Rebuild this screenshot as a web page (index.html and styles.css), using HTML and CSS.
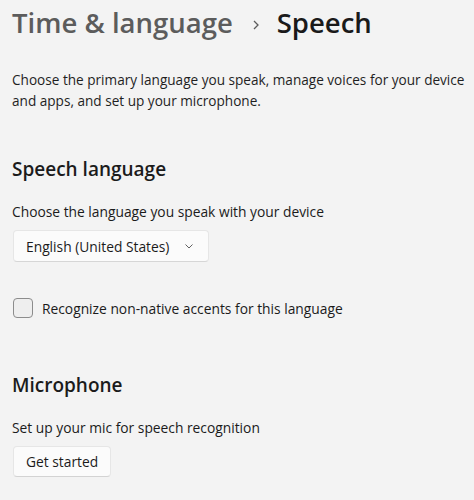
FILE: index.html
```html
<!DOCTYPE html>
<html lang="en">
<head>
    <meta charset="UTF-8">
    <meta name="viewport" content="width=device-width, initial-scale=1.0">
    <title>Speech</title>
    <link rel="stylesheet" href="styles.css">
</head>
<body>
    <div class="page">
        <h1 class="breadcrumb">
            <span class="crumb-parent">Time &amp; language</span>
            <svg class="crumb-sep" width="6" height="10" viewBox="0 0 6 10">
                <path d="M1 1l4 4-4 4" fill="none" stroke="#5c5c5c" stroke-width="1.3"/>
            </svg>
            <span class="crumb-current">Speech</span>
        </h1>
        <p class="intro">Choose the primary language you speak, manage voices for your device and apps, and set up your microphone.</p>

        <section class="section">
            <h2>Speech language</h2>
            <p class="hint">Choose the language you speak with your device</p>
            <div class="dropdown">
                <span>English (United States)</span>
                <svg class="chevron" width="8" height="5" viewBox="0 0 8 5">
                    <path d="M0.5 0.5l3.5 3.5 3.5-3.5" fill="none" stroke="#606060" stroke-width="1"/>
                </svg>
            </div>
            <label class="check-row">
                <span class="checkbox"></span>
                <span>Recognize non-native accents for this language</span>
            </label>
        </section>

        <section class="section mic">
            <h2>Microphone</h2>
            <p class="hint">Set up your mic for speech recognition</p>
            <button type="button" class="btn">Get started</button>
        </section>
    </div>
</body>
</html>
```

FILE: styles.css
```css
body {
    margin: 0;
    background-color: #f3f3f3;
    font-family: "Open Sans", "Noto Sans", sans-serif;
    color: #1b1b1b;
}
.page {
    padding: 0 4px 0 12px;
    height: 500px;
    box-sizing: border-box;
}
.breadcrumb {
    margin: 0;
    padding-top: 1px;
    display: flex;
    align-items: baseline;
    font-size: 27.5px;
    font-weight: 600;
    line-height: 44px;
}
.crumb-parent {
    color: #5c5c5c;
}
.crumb-sep {
    align-self: center;
    margin: 4px 18px 0 20px;
}
.crumb-current {
    color: #1a1a1a;
}
.intro {
    margin: 24px 0 0;
    font-size: 13.6px;
    line-height: 21px;
    color: #1f1f1f;
}
.section h2 {
    margin: 0;
    font-size: 19px;
    font-weight: 600;
    line-height: 28px;
}
.section {
    margin-top: 44px;
}
.hint {
    margin: 19px 0 0;
    font-size: 13.8px;
    line-height: 20px;
}
.dropdown {
    margin-top: 8px;
    margin-left: 1px;
    display: inline-flex;
    align-items: center;
    gap: 16px;
    height: 32px;
    box-sizing: border-box;
    padding: 0 15px 0 12px;
    background-color: #fbfbfb;
    border: 1px solid #e6e6e6;
    border-bottom-color: #d6d6d6;
    border-radius: 4px;
    font-size: 13.8px;
}
.check-row {
    margin-top: 36px;
    margin-left: 1px;
    display: flex;
    align-items: center;
    gap: 9px;
    font-size: 13.8px;
}
.checkbox {
    width: 18px;
    height: 18px;
    border: 1px solid #8c8c8c;
    border-radius: 4px;
    background-color: #eeeeee;
}
.mic {
    margin-top: 53px;
}
.btn {
    margin-top: 8px;
    margin-left: 1px;
    height: 31px;
    padding: 0 12px;
    background-color: #fbfbfb;
    border: 1px solid #e6e6e6;
    border-bottom-color: #d3d3d3;
    border-radius: 4px;
    font-family: inherit;
    font-size: 13.8px;
    color: #1b1b1b;
}
```
